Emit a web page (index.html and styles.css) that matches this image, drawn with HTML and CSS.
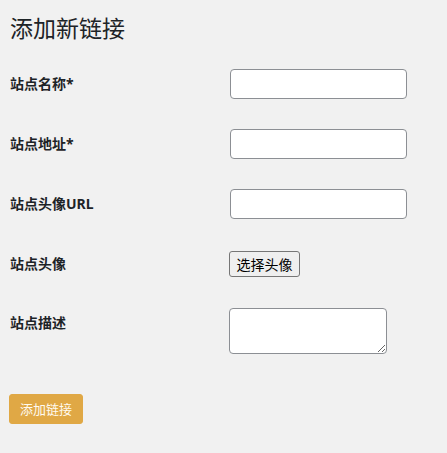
FILE: index.html
```html
<!DOCTYPE html>
<html lang="zh-CN">
<head>
<meta charset="utf-8">
<title>添加新链接</title>
<link rel="stylesheet" href="styles.css">
</head>
<body>
<div class="wrap">
  <h1 class="title">添加新链接</h1>
  <form class="form">
    <div class="row">
      <label class="label">站点名称*</label>
      <div class="field"><input class="text" type="text"></div>
    </div>
    <div class="row">
      <label class="label">站点地址*</label>
      <div class="field"><input class="text" type="text"></div>
    </div>
    <div class="row">
      <label class="label">站点头像URL</label>
      <div class="field"><input class="text" type="text"></div>
    </div>
    <div class="row row-btn">
      <label class="label">站点头像</label>
      <div class="field"><button class="pick" type="button">选择头像</button></div>
    </div>
    <div class="row row-area">
      <label class="label">站点描述</label>
      <div class="field"><textarea class="area"></textarea></div>
    </div>
    <div class="submit-row">
      <button class="submit" type="button">添加链接</button>
    </div>
  </form>
</div>
</body>
</html>
```
FILE: styles.css
```css
html, body {
  margin: 0;
  padding: 0;
  background: #f1f1f1;
}
body {
  font-family: "Noto Sans", "Noto Sans CJK SC", sans-serif;
  color: #1d2327;
  font-size: 14px;
}
.wrap {
  padding: 0 10px;
}
.title {
  margin: 0;
  padding: 13px 0 0;
  font-size: 23px;
  font-weight: 400;
  line-height: 30px;
  height: 41px;
}
.form {
  display: flex;
  flex-direction: column;
}
.row {
  display: grid;
  grid-template-columns: 220px 1fr;
  height: 60px;
}
.label {
  font-weight: 700;
  font-size: 14px;
  line-height: 18px;
  padding-top: 21px;
}
.field {
  padding-top: 15px;
}
.text {
  box-sizing: border-box;
  display: block;
  width: 177px;
  height: 30px;
  margin: 0;
  border: 1px solid #8c8f94;
  border-radius: 4px;
  background: #fff;
  padding: 0 8px;
}
.row-btn .field {
  padding-top: 17px;
}
.row-btn {
  height: 59px;
}
.pick {
  box-sizing: border-box;
  margin: 0 0 0 -1px;
  width: 71px;
  height: 26px;
  padding: 0;
  font-family: "Noto Sans CJK SC", sans-serif;
  font-size: 14px;
  line-height: 20px;
  color: #000;
  background: #efefef;
  border: 1px solid #767676;
  border-radius: 3px;
}
.row-area {
  height: 86px;
}
.row-area .field {
  padding-top: 15px;
}
.area {
  box-sizing: border-box;
  display: block;
  margin: 0 0 0 -1px;
  width: 158px;
  height: 46px;
  border: 1px solid #8c8f94;
  border-radius: 4px;
  background: #fff;
}
.submit-row {
  padding-top: 15px;
}
.submit {
  box-sizing: border-box;
  margin: 0 0 0 -1px;
  width: 74px;
  height: 30px;
  padding: 0;
  font-family: "Noto Sans CJK SC", sans-serif;
  font-size: 13px;
  line-height: 28px;
  color: #fffaf0;
  background: #e0a845;
  border: 1px solid #e0a845;
  border-radius: 3px;
}
```
